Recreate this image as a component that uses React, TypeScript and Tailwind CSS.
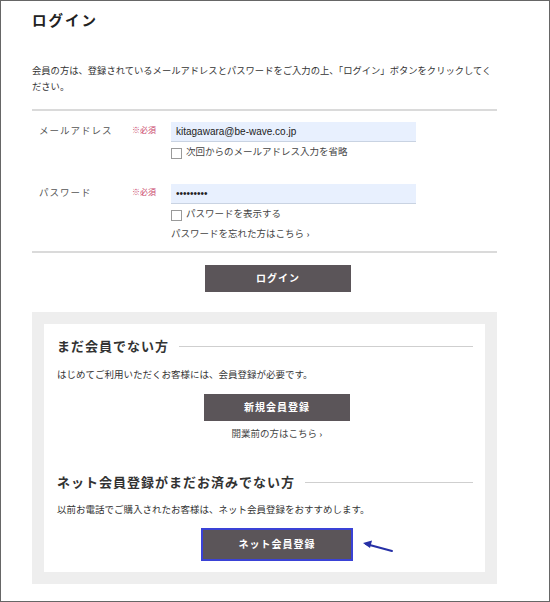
import * as React from "react";

const jp = "font-['Liberation_Serif','Noto_Sans_CJK_JP',serif]";

function Checkbox({ label }: { label: string }) {
    return (
        <label className="flex items-center gap-[4px] h-[12px]">
            <span className="w-[11px] h-[11px] border border-[#9a9a9a] bg-white shrink-0" />
            <span className="text-[9.5px] text-[#444] leading-none">{label}</span>
        </label>
    );
}

function FormRow({ label, value, type, children }: { label: string; value: string; type: string; children?: React.ReactNode }) {
    return (
        <div className="flex">
            <div className="w-[100px] pl-[7px] pt-[5px] text-[9.5px] text-[#555] leading-none tracking-[1px]">{label}</div>
            <div className="w-[39px] pt-[5px] text-[8px] text-[#c9456a] leading-none">※必須</div>
            <div className="flex flex-col w-[245px]">
                <input
                    readOnly
                    type={type}
                    value={value}
                    className="h-[20px] w-[245px] bg-[#e8f0fe] border-b border-[#c9d3e2] px-[5px] text-[10px] text-[#222] font-['Liberation_Sans',sans-serif] outline-none"
                />
                <div className="flex flex-col gap-[5px] mt-[5px]">{children}</div>
            </div>
        </div>
    );
}

function DarkButton({ text, highlighted, className }: { text: string; highlighted?: boolean; className: string }) {
    return (
        <button
            className={
                (highlighted
                    ? "w-[152px] h-[33px] bg-[#5b5559] border-2 border-[#3a42d6] text-white text-[10px] font-bold tracking-[1px] "
                    : "w-[146px] h-[27px] bg-[#5b5559] text-white text-[10px] font-bold tracking-[1px] ") + className
            }
        >
            {text}
        </button>
    );
}

function SectionTitle({ text }: { text: string }) {
    return (
        <div className="flex items-center gap-[10px] pr-[12px]">
            <h3 className="text-[13px] font-bold text-[#333] tracking-[1px] leading-none whitespace-nowrap">{text}</h3>
            <div className="flex-1 border-t border-[#cfcfcf]" />
        </div>
    );
}

export default function App() {
    return (
        <div className={`w-[550px] h-[602px] border border-[#666] bg-white ${jp} overflow-hidden`}>
            <div className="ml-[31px] w-[465px] flex flex-col">
                <h2 className="mt-[12px] text-[14.5px] font-bold text-[#222] tracking-[2px] leading-[16px]">ログイン</h2>
                <p className="mt-[34px] text-[9.3px] leading-[16px] text-[#333]">
                    会員の方は、登録されているメールアドレスとパスワードをご入力の上、「ログイン」ボタンをクリックしてください。
                </p>
                <div className="mt-[14px] border-t-2 border-[#dadada]" />

                <div className="mt-[11px]">
                    <FormRow label="メールアドレス" value="kitagawara@be-wave.co.jp" type="text">
                        <Checkbox label="次回からのメールアドレス入力を省略" />
                    </FormRow>
                </div>
                <div className="mt-[25px]">
                    <FormRow label="パスワード" value="kitagawar" type="password">
                        <Checkbox label="パスワードを表示する" />
                        <div className="mt-[1px] text-[9.5px] text-[#444] leading-[14px]">パスワードを忘れた方はこちら ›</div>
                    </FormRow>
                </div>

                <div className="mt-[10px] border-t-2 border-[#dadada]" />
                <div className="mt-[12px]">
                    <DarkButton text="ログイン" className="ml-[173px]" />
                </div>

                <div className="mt-[20px] bg-[#eeeeee] p-[12px]">
                    <div className="bg-white h-[248px] pl-[13px] pt-[16px] flex flex-col">
                        <SectionTitle text="まだ会員でない方" />
                        <p className="mt-[15px] text-[9.5px] text-[#333] leading-[14px]">はじめてご利用いただくお客様には、会員登録が必要です。</p>
                        <div className="mt-[12px] -ml-[13px]">
                            <DarkButton text="新規会員登録" className="ml-[160px]" />
                        </div>
                        <div className="mt-[6px] -ml-[13px] w-[440px] pl-[26px] text-center text-[9.5px] text-[#444] leading-[14px]">開業前の方はこちら ›</div>

                        <div className="mt-[35px]">
                            <SectionTitle text="ネット会員登録がまだお済みでない方" />
                        </div>
                        <p className="mt-[14px] text-[9.5px] text-[#333] leading-[14px]">以前お電話でご購入されたお客様は、ネット会員登録をおすすめします。</p>
                        <div className="mt-[11px] -ml-[13px] flex items-center">
                            <DarkButton text="ネット会員登録" highlighted className="ml-[157px]" />
                            <svg width="32" height="14" viewBox="0 0 32 14" className="ml-[9px] mt-[4px]">
                                <line x1="4" y1="4" x2="30" y2="11" stroke="#2630a6" strokeWidth="2" strokeLinecap="round" />
                                <path d="M1 3 L10 0.5 L8 8 Z" fill="#2630a6" />
                            </svg>
                        </div>
                    </div>
                </div>
            </div>
        </div>
    );
}
